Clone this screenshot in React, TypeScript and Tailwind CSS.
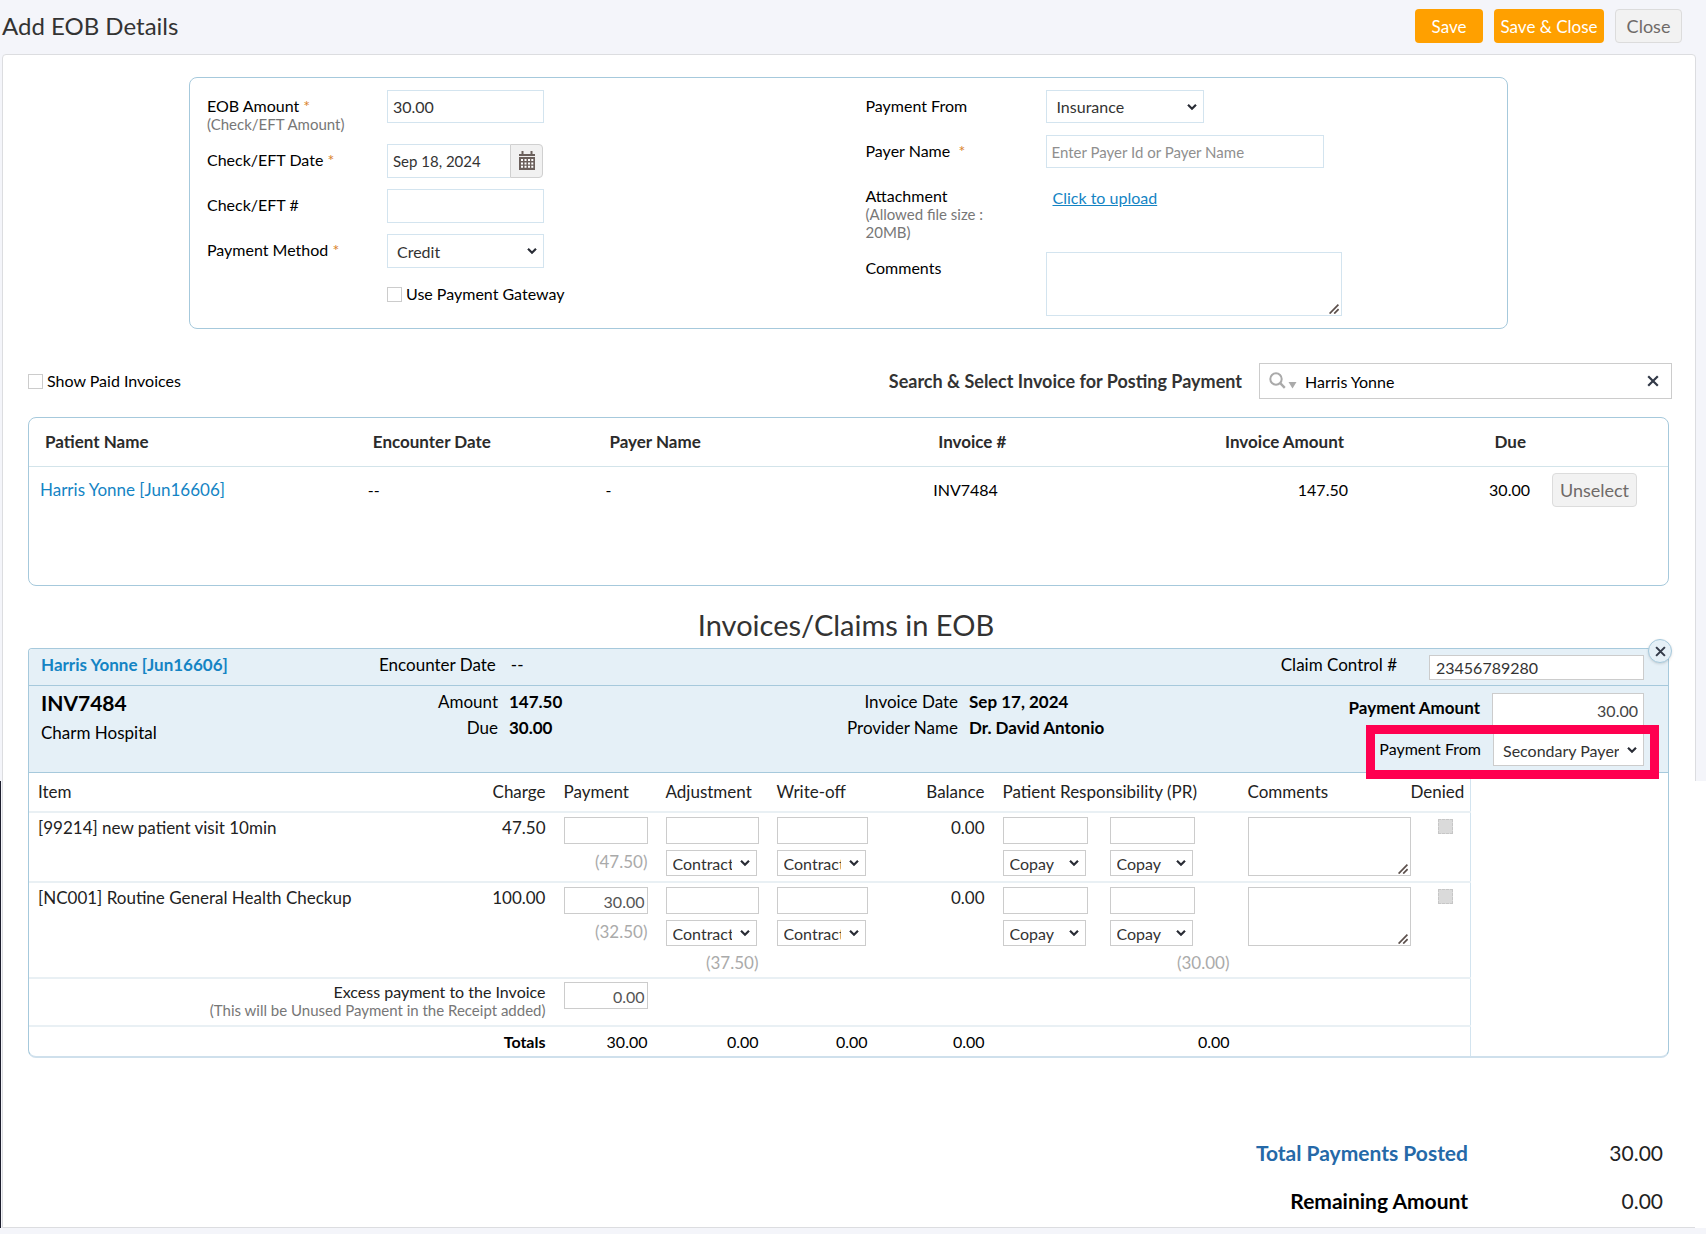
import React, { useId } from "react";

const field =
  "rounded-none border border-[#d3e4ef] bg-white px-[5px] text-[#333] outline-none placeholder:text-[#8f8f8f]";
const gridField =
  "block h-[27px] rounded-none border border-[#ccc] bg-white pt-0.5 pr-0.5 text-right text-base text-[#555] outline-none";
const grayButton = "h-[34px] rounded border border-[#dcdcdc] bg-[#f2f2f2] text-lg leading-none text-[#6f6a68]";
const orangeButton = "h-[34px] rounded bg-[#ffa000] text-[17px] leading-none text-white";

function Star() {
  return <span className="text-[#d9822b]">*</span>;
}

function Dropdown({
  id,
  name,
  value,
  wrap,
  className,
}: {
  id?: string;
  name?: string;
  value: string;
  wrap: string;
  className: string;
}) {
  return (
    <div className={`relative ${wrap}`}>
      <select
        id={id}
        aria-label={name}
        defaultValue={value}
        className={`block w-full appearance-none rounded-none border bg-white text-base text-[#333] outline-none ${className}`}
      >
        <option>{value}</option>
      </select>
      <svg
        viewBox="0 0 10 7"
        className="pointer-events-none absolute top-1/2 right-[7px] h-[7px] w-2.5 -translate-y-1/2"
        fill="none"
      >
        <path d="M1 1.2l4 4 4-4" stroke="#2a2d36" strokeWidth="2.2" />
      </svg>
    </div>
  );
}

function NoteBox({ id, name, wrap, className }: { id?: string; name?: string; wrap: string; className: string }) {
  return (
    <div className={`relative ${wrap}`}>
      <textarea id={id} aria-label={name} className={`block w-full resize-none border bg-white outline-none ${className}`} />
      <svg viewBox="0 0 10 10" className="pointer-events-none absolute right-[3px] bottom-0.5 size-2.5" fill="none">
        <path d="M0.6 9.6L9.4 0.6M5.2 9.6L9.6 5.2" stroke="#5c504c" strokeWidth="1.7" />
      </svg>
    </div>
  );
}

function Row({
  label,
  note,
  required,
  className,
  children,
}: {
  label: string;
  note?: string;
  required?: boolean;
  className: string;
  children: (id: string) => React.ReactNode;
}) {
  const id = useId();
  return (
    <div className={`flex items-start ${className}`}>
      <label htmlFor={id} className="w-[180px] shrink-0 pt-[7px] leading-[18px] text-black">
        {label} {required && <Star />}
        {note && <span className="block w-[150px] text-[15px] text-[#777]">{note}</span>}
      </label>
      {children(id)}
    </div>
  );
}

function CalendarIcon() {
  return (
    <svg viewBox="0 0 18 20" className="h-5 w-[18px]" fill="none">
      <path d="M1 3h16v16H1z" fill="#6b605c" />
      <path d="M4.5 0v4M13.5 0v4" stroke="#6b605c" strokeWidth="2" />
      <path d="M0 5.5h18" stroke="#f0eeee" strokeWidth="1" />
      <path
        d="M3 8h2v2H3zM6.5 8h2v2h-2zM10 8h2v2h-2zM13.3 8h2v2h-2zM3 11.4h2v2H3zM6.5 11.4h2v2h-2zM10 11.4h2v2h-2zM13.3 11.4h2v2h-2zM3 14.8h2v2H3zM6.5 14.8h2v2h-2zM10 14.8h2v2h-2zM13.3 14.8h2v2h-2z"
        fill="#fff"
      />
    </svg>
  );
}

function SearchIcon() {
  return (
    <svg viewBox="0 0 28 18" className="h-[18px] w-7 shrink-0" fill="none">
      <circle cx="7" cy="7" r="5.7" stroke="#aaa" strokeWidth="2" />
      <path d="M11.2 11.2l4.6 4.6" stroke="#aaa" strokeWidth="2.4" />
      <path d="M19.5 10h8l-4 6.5z" fill="#aaa" />
    </svg>
  );
}

function CrossIcon({ className }: { className: string }) {
  return (
    <svg viewBox="0 0 12 12" className={className} fill="none">
      <path d="M1.2 1.2l9.6 9.6M10.8 1.2l-9.6 9.6" stroke="#333a48" strokeWidth="2.2" />
    </svg>
  );
}

function Choice({ label, name }: { label: string; name: string }) {
  return (
    <Dropdown
      name={name}
      value={label}
      wrap="mt-1.5 mr-0.5"
      className="h-[26px] border-[#ccc] pt-px pr-6 pl-1.5"
    />
  );
}

type Item = { name: string; charge: string; payment: string; due: string; adj?: string; pr?: string };
const items: Item[] = [
  { name: "[99214] new patient visit 10min", charge: "47.50", payment: "", due: "(47.50)" },
  {
    name: "[NC001] Routine General Health Checkup",
    charge: "100.00",
    payment: "30.00",
    due: "(32.50)",
    adj: "(37.50)",
    pr: "(30.00)",
  },
];

function ItemRow({ item }: { item: Item }) {
  const note = "leading-5 text-[#aaa] text-right";
  return (
    <tr className="border-b-2 border-[#e9f0f4] align-top">
      <td className="pt-[5px] pl-[9px] leading-5">{item.name}</td>
      <td className="pt-[5px] text-right leading-5">{item.charge}</td>
      <td className="pt-1 pl-[18px]">
        <input aria-label="Payment" defaultValue={item.payment} className={`${gridField} w-full`} />
        <div className={`mt-2 ${note}`}>{item.due}</div>
      </td>
      <td className="pt-1 pl-[18px]">
        <input aria-label="Adjustment" className={`${gridField} w-full`} />
        <Choice name="Adjustment type" label="Contractual" />
        {item.adj && <div className={`mt-[7px] mb-1 ${note}`}>{item.adj}</div>}
      </td>
      <td className="pt-1 pl-[18px]">
        <input aria-label="Write-off" className={`${gridField} w-full`} />
        <Choice name="Write-off type" label="Contractual" />
      </td>
      <td className="pt-[5px] text-right leading-5">0.00</td>
      <td className="pt-1 pl-[18px]">
        <div className="flex gap-[22px]">
          {["PR 1", "PR 2"].map((n) => (
            <div key={n} className="w-[85px]">
              <input aria-label={n} className={`${gridField} w-full`} />
              <Choice name={`${n} type`} label="Copay" />
            </div>
          ))}
        </div>
        {item.pr && <div className={`mt-[7px] ${note}`}>{item.pr}</div>}
      </td>
      <td className="pt-1 pl-[18px]">
        <NoteBox name="Comments" wrap="mb-[5px] w-[163px]" className="h-[59px] border-[#ccc]" />
      </td>
      <td className="pt-1.5 pl-[27px]">
        <input
          type="checkbox"
          aria-label="Denied"
          disabled
          className="block size-[15px] appearance-none border border-dashed border-[#c6c6c6] bg-[#dadada]"
        />
      </td>
    </tr>
  );
}

function EobForm() {
  return (
    <section className="mr-[187px] ml-[186px] mt-[22px] grid grid-cols-2 rounded-lg border border-[#a6c9dc] py-3">
      <div className="pl-[17px]">
        <Row label="EOB Amount" note="(Check/EFT Amount)" required className="h-[54px]">
          {(id) => <input id={id} defaultValue="30.00" className={`${field} h-[33px] w-[157px]`} />}
        </Row>
        <Row label="Check/EFT Date" required className="h-[45px]">
          {(id) => (
            <div className="flex">
              <input
                id={id}
                defaultValue="Sep 18, 2024"
                className={`${field} h-[34px] w-[123px] border-r-0 text-[15px]`}
              />
              <button
                aria-label="Pick a date"
                className="flex h-[34px] w-[33px] items-center justify-center rounded-r-sm border border-[#d0d0d0] bg-[#f1f1f1]"
              >
                <CalendarIcon />
              </button>
            </div>
          )}
        </Row>
        <Row label="Check/EFT #" className="h-[45px]">
          {(id) => <input id={id} className={`${field} h-[34px] w-[157px]`} />}
        </Row>
        <Row label="Payment Method" required className="h-[45px]">
          {(id) => (
            <Dropdown id={id} value="Credit" wrap="w-[157px]" className="h-[34px] border-[#d3e4ef] pt-0.5 pr-6 pl-[9px]" />
          )}
        </Row>
        <label className="ml-[180px] flex w-fit items-center gap-1 pt-[5px] leading-5 text-black">
          <input type="checkbox" className="size-[15px] appearance-none border border-[#ccc] bg-white" />
          Use Payment Gateway
        </label>
      </div>
      <div className="pl-[17px]">
        <Row label="Payment From" className="h-[45px]">
          {(id) => (
            <Dropdown id={id} value="Insurance" wrap="w-[158px]" className="h-[33px] border-[#d3e4ef] pr-6 pl-2.5" />
          )}
        </Row>
        <Row label={"Payer Name\u00a0"} required className="h-[45px]">
          {(id) => (
            <input
              id={id}
              placeholder="Enter Payer Id or Payer Name"
              className={`${field} h-[33px] w-[278px] text-[15px]`}
            />
          )}
        </Row>
        <Row label="Attachment" note="(Allowed file size : 20MB)" className="h-[72px]">
          {(id) => (
            <a id={id} href="#upload" className="pt-2 pl-[7px] leading-5 text-[#1484c4] underline">
              Click to upload
            </a>
          )}
        </Row>
        <Row label="Comments" className="h-16">
          {(id) => <NoteBox id={id} wrap="w-[296px]" className="h-16 border-[#d3e4ef]" />}
        </Row>
      </div>
    </section>
  );
}

function InvoiceSearch() {
  return (
    <div className="mt-[34px] mr-[23px] ml-[25px] flex items-center justify-between">
      <label className="flex items-center gap-1 text-black">
        <input type="checkbox" className="size-[15px] appearance-none border border-[#ccc] bg-white" />
        Show Paid Invoices
      </label>
      <div className="flex items-center gap-[17px]">
        <label htmlFor="search" className="text-lg font-bold text-[#333]">
          Search &amp; Select Invoice for Posting Payment
        </label>
        <div className="flex h-9 w-[413px] items-center border border-[#ccc] pr-3 pl-[9px]">
          <SearchIcon />
          <input
            id="search"
            defaultValue="Harris Yonne"
            className="ml-2 min-w-0 flex-1 pt-0.5 text-base text-black outline-none"
          />
          <button aria-label="Clear search">
            <CrossIcon className="size-3" />
          </button>
        </div>
      </div>
    </div>
  );
}

function InvoiceTable() {
  return (
    <div className="mt-[18px] mr-[26px] ml-[25px] h-[169px] rounded-lg border border-[#a6c9dc]">
      <table className="w-full table-fixed">
        <colgroup>
          <col className="w-[20%]" />
          <col className="w-[14.5%]" />
          <col className="w-[20%]" />
          <col className="w-[16%]" />
          <col />
          <col className="w-[182px]" />
          <col className="w-[138px]" />
        </colgroup>
        <thead>
          <tr className="h-[48px] border-b border-[#d3e4ea] text-left text-[17px] text-[#2b2b2b]">
            <th className="pl-4">Patient Name</th>
            <th className="pl-4">Encounter Date</th>
            <th className="pl-[15px]">Payer Name</th>
            <th className="pl-4">Invoice #</th>
            <th className="pr-1 text-right">Invoice Amount</th>
            <th className="pr-1 text-right">Due</th>
            <td />
          </tr>
        </thead>
        <tbody>
          <tr className="h-[47px] text-black">
            <td className="pl-[11px]">
              <a href="#patient" className="text-[17px] text-[#1484c4]">
                Harris Yonne [Jun16606]
              </a>
            </td>
            <td className="pl-[11px]">--</td>
            <td className="pl-[11px]">-</td>
            <td className="pl-[11px]">INV7484</td>
            <td className="text-right">147.50</td>
            <td className="text-right">30.00</td>
            <td className="pl-[22px]">
              <button className={`${grayButton} w-[85px]`}>Unselect</button>
            </td>
          </tr>
        </tbody>
      </table>
    </div>
  );
}

function Pair({ label, value, width }: { label: string; value: string; width: string }) {
  return (
    <div className="flex h-[26px] items-center gap-[11px]">
      <span className={`${width} text-right`}>{label}</span>
      <span className="font-bold">{value}</span>
    </div>
  );
}

function ClaimHeader() {
  return (
    <div className="rounded-t-sm bg-[#e5f0f7] text-[17px] text-black">
      <div className="flex h-[37px] items-center border-b border-[#a6c9dc] pr-6 pl-3">
        <a href="#patient" className="w-[338px] pb-1 font-bold text-[#1484c4]">
          Harris Yonne [Jun16606]
        </a>
        <span className="pb-1">Encounter Date</span>
        <span className="pb-1 pl-[15px]">--</span>
        <label htmlFor="control" className="ml-auto pr-8 pb-1">
          Claim Control #
        </label>
        <input
          id="control"
          defaultValue="23456789280"
          className="h-[25px] w-[215px] border border-[#ccc] bg-white px-1.5 text-base text-[#333] outline-none"
        />
      </div>
      <div className="flex h-[87px] items-start border-b border-[#a6c9dc] pl-3">
        <div className="w-[280px] pt-[3px]">
          <div className="text-[21px] leading-7 font-bold">INV7484</div>
          <div className="pt-1 leading-6">Charm Hospital</div>
        </div>
        <div className="flex-1 pt-[3px]">
          <Pair label="Amount" value="147.50" width="w-[177px]" />
          <Pair label="Due" value="30.00" width="w-[177px]" />
        </div>
        <div className="w-[486px] pt-[3px]">
          <Pair label="Invoice Date" value="Sep 17, 2024" width="w-[141px]" />
          <Pair label="Provider Name" value="Dr. David Antonio" width="w-[141px]" />
        </div>
        <div className="relative w-[365px] pt-[7px] pr-6">
          <div className="flex items-start justify-end gap-3">
            <label htmlFor="amount" className="pt-0.5 font-bold">
              Payment Amount
            </label>
            <input
              id="amount"
              defaultValue="30.00"
              className="h-[34px] w-[152px] border border-[#ccc] bg-white px-[5px] text-right text-base text-[#444] outline-none"
            />
          </div>
          <div className="flex items-start justify-end gap-3 pt-1.5">
            <label htmlFor="from" className="pt-1 text-base">
              Payment From
            </label>
            <Dropdown
              id="from"
              value="Secondary Payer"
              wrap="w-[151px]"
              className="h-[33px] border-[#ccc] pt-0.5 pr-6 pl-[9px]"
            />
          </div>
          <div className="pointer-events-none absolute top-[39px] right-[9px] h-[54px] w-[293px] border-9 border-[#ff0050]" />
        </div>
      </div>
    </div>
  );
}

function ClaimCard() {
  return (
    <section className="relative mr-[26px] ml-[25px] rounded-t-sm rounded-b-lg border border-b-2 border-[#a6c9dc] border-b-[#cfe0ec]">
      <ClaimHeader />
      <div className="flex">
        <table className="min-w-0 flex-1 table-fixed border-r border-[#d3e4ef] text-[17px] text-[#222]">
          <colgroup>
            <col />
            <col className="w-[110px]" />
            <col className="w-[102px]" />
            <col className="w-[111px]" />
            <col className="w-[109px]" />
            <col className="w-[117px]" />
            <col className="w-[245px]" />
            <col className="w-[181px]" />
            <col className="w-[60px]" />
          </colgroup>
          <thead>
            <tr className="h-[39px] border-b-2 border-[#e9f0f4] text-left [&>th]:font-normal">
              <th className="pl-[9px]">Item</th>
              <th className="text-right">Charge</th>
              <th className="pl-[18px]">Payment</th>
              <th className="pl-[18px]">Adjustment</th>
              <th className="pl-[18px]">Write-off</th>
              <th className="text-right">Balance</th>
              <th className="pl-[18px]">Patient Responsibility (PR)</th>
              <th className="pl-[18px]">Comments</th>
              <th>Denied</th>
            </tr>
          </thead>
          <tbody>
            {items.map((i) => (
              <ItemRow key={i.name} item={i} />
            ))}
            <tr className="h-[48px] border-b-2 border-[#e9f0f4] align-top">
              <td colSpan={2} className="pt-1 text-right text-base leading-[18px]">
                <label htmlFor="excess">
                  Excess payment to the Invoice
                  <span className="block text-[15px] text-[#777]">
                    (This will be Unused Payment in the Receipt added)
                  </span>
                </label>
              </td>
              <td className="pt-[3px] pl-[18px]">
                <input id="excess" defaultValue="0.00" className={`${gridField} w-full`} />
              </td>
              <td colSpan={6} />
            </tr>
            <tr className="h-[30px] text-right text-base text-black">
              <td />
              <td className="font-bold">Totals</td>
              <td>30.00</td>
              <td>0.00</td>
              <td>0.00</td>
              <td>0.00</td>
              <td>0.00</td>
              <td />
              <td />
            </tr>
          </tbody>
        </table>
        <div className="w-[197px] shrink-0" />
      </div>
      <button
        aria-label="Remove claim"
        className="absolute -top-[10px] -right-1 flex size-6 items-center justify-center rounded-full border border-[#a6c9dc] bg-[#e5f0f7] shadow-sm"
      >
        <CrossIcon className="size-[11px]" />
      </button>
    </section>
  );
}

export default function App() {
  return (
    <div className="relative bg-[#f4f5fa] pb-1.5 font-['Lato',sans-serif] text-base">
      <header className="flex h-[54px] items-start justify-between pr-6 pl-0.5">
        <h1 className="pt-2 text-2xl leading-9 text-[#333]">Add EOB Details</h1>
        <div className="flex gap-[11px] pt-[9px]">
          <button className={`${orangeButton} w-[68px]`}>Save</button>
          <button className={`${orangeButton} w-[110px]`}>Save &amp; Close</button>
          <button className={`${grayButton} w-[67px]`}>Close</button>
        </div>
      </header>
      <main className="relative mr-[10px] ml-0.5 overflow-hidden rounded-t-sm border border-[#dcdde0] bg-white pb-0.5">
        <EobForm />
        <InvoiceSearch />
        <InvoiceTable />
        <h2 className="pt-4 pr-1.5 pb-px text-center text-[29px] leading-[45px] text-[#333]">
          Invoices/Claims in EOB
        </h2>
        <ClaimCard />
        <dl className="mt-[71px] mr-8 grid grid-cols-[1fr_195px] text-right text-[21px] leading-[48px]">
          <dt className="font-bold text-[#2569a8]">Total Payments Posted</dt>
          <dd className="text-[#222]">30.00</dd>
          <dt className="font-bold text-black">Remaining Amount</dt>
          <dd className="text-[#222]">0.00</dd>
        </dl>
      </main>
      <div className="absolute top-[781px] bottom-1.5 left-0 w-px bg-[#1d1f2e]" />
      <div className="absolute top-[781px] right-0 bottom-1.5 w-[11px] bg-white" />
    </div>
  );
}
